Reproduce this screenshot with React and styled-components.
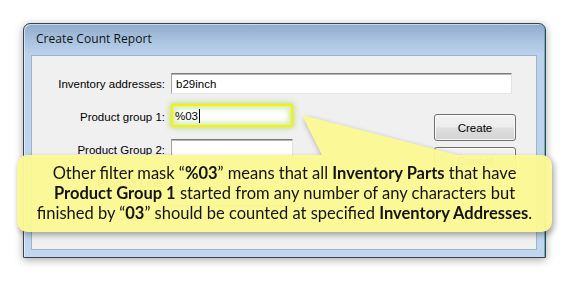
import React from "react";
import styled, { createGlobalStyle } from "styled-components";

const Global = createGlobalStyle`
  html, body { margin: 0; padding: 0; background: #ffffff; }
  body { font-family: "Liberation Sans", Arial, sans-serif; }
`;

const Page = styled.div`
  position: relative;
  width: 568px;
  height: 281px;
  overflow: hidden;
  background: #ffffff;
  padding: 23px 0 0 23px;
  box-sizing: border-box;
`;

const Window = styled.div`
  width: 523px;
  height: 235px;
  box-sizing: border-box;
  display: flex;
  flex-direction: column;
  border: 1px solid #3f4247;
  border-radius: 7px 7px 0 0;
  background: linear-gradient(180deg, #8eaacb 0px, #a9c2df 16px, #bad2ec 31px, #c0d7ef 100%);
  box-shadow: 0 2px 9px rgba(0, 0, 0, 0.35), inset -1px 0 0 #5fb0c4, inset 1px 1px 0 rgba(255,255,255,0.55);
`;

const TitleBar = styled.div`
  height: 31px;
  display: flex;
  align-items: center;
  padding: 0 0 2px 12px;
  box-sizing: border-box;
  font-family: "Open Sans", "Noto Sans", sans-serif;
  font-size: 12px;
  color: #111;
  letter-spacing: 0.05px;
`;

const Client = styled.div`
  flex: 1;
  margin: 0 8px 7px 7px;
  background: #f0f0f0;
  border: 1px solid #9fb3c9;
  box-sizing: border-box;
  display: grid;
  grid-template-columns: 133px 122px 129px 82px;
  grid-auto-rows: 21px;
  column-gap: 6px;
  row-gap: 12px;
  padding-top: 17px;
  align-content: start;
  font-size: 11.5px;
  color: #000;
`;

const Label = styled.div`
  grid-column: 1;
  display: flex;
  align-items: center;
  justify-content: flex-end;
  white-space: nowrap;
`;

const Field = styled.div`
  grid-column: ${(p) => (p.$wide ? "2 / -1" : "2")};
  width: ${(p) => (p.$wide ? "341px" : "auto")};
  height: 21px;
  box-sizing: border-box;
  background: #ffffff;
  border: 1px solid;
  border-color: #7b7b7b #e2e2e2 #e6e6e6 #a3a3a3;
  box-shadow: inset 0 1px 0 #b5b5b5;
  display: flex;
  align-items: center;
  padding-left: 4px;
  white-space: nowrap;
`;

const HighlightField = styled.div`
  grid-column: 2;
  align-self: end;
  height: 23px;
  box-sizing: border-box;
  border: 2px solid #f4f400;
  border-radius: 3px;
  background: #ffffff;
  box-shadow: 0 0 5px 2px rgba(190, 222, 120, 0.75), inset 0 0 5px 3px rgba(205, 232, 160, 0.8);
  display: flex;
  align-items: center;
  padding-left: 2px;
  white-space: nowrap;
`;

const Caret = styled.span`
  display: inline-block;
  width: 1px;
  height: 14px;
  background: #000;
  margin-left: 1px;
`;

const ButtonColumn = styled.div`
  grid-column: 4;
  grid-row: 2 / span 3;
  display: flex;
  flex-direction: column;
  gap: 6px;
  padding-top: 8px;
`;

const Button = styled.div`
  width: 82px;
  height: 27px;
  box-sizing: border-box;
  border: 1px solid #6f6f6f;
  border-radius: 3px;
  background: linear-gradient(180deg, #f3f3f3 0%, #ececec 48%, #dfdfdf 52%, #d3d3d3 100%);
  box-shadow: inset 0 0 0 1px rgba(255, 255, 255, 0.8);
  display: flex;
  align-items: center;
  justify-content: center;
  font-size: 11.5px;
`;

const CalloutWrap = styled.div`
  position: absolute;
  left: 17px;
  top: 114px;
  width: 540px;
  height: 125px;
  filter: drop-shadow(2px 3px 3px rgba(0, 0, 0, 0.35));
  opacity: 0.965;
`;

const Pointer = styled.svg`
  position: absolute;
  left: 0;
  top: 0;
  overflow: visible;
`;

const CalloutBox = styled.div`
  position: absolute;
  left: 0;
  top: 41px;
  width: 535px;
  height: 77px;
  box-sizing: border-box;
  border-radius: 10px;
  background: #fbf994;
  padding-top: 8px;
  text-align: center;
  font-family: Lato, "Open Sans", sans-serif;
  font-size: 16.5px;
  line-height: 20px;
  color: #0d0d0d;
  white-space: nowrap;
`;

const B = styled.b`
  font-weight: 700;
`;

export default function App() {
  return (
    <Page>
      <Global />
      <Window>
        <TitleBar>Create Count Report</TitleBar>
        <Client>
          <Label>Inventory addresses:</Label>
          <Field $wide>b29inch</Field>

          <Label>Product group 1:</Label>
          <HighlightField>
            %03
            <Caret />
          </HighlightField>

          <Label>Product Group 2:</Label>
          <Field />

          <Label>Product Line:</Label>
          <Field />

          <Label>Counters:</Label>
          <Field />

          <ButtonColumn>
            <Button>Create</Button>
            <Button>Cancel</Button>
          </ButtonColumn>
        </Client>
      </Window>

      <CalloutWrap>
        <Pointer width="1" height="1">
          <polygon points="285,1 306,43 448,43" fill="#fbf994" />
        </Pointer>
        <CalloutBox>
          Other filter mask “<B>%03</B>” means that all <B>Inventory Parts</B> that have
          <br />
          <B>Product Group 1</B> started from any number of any characters but
          <br />
          finished by “<B>03</B>” should be counted at specified <B>Inventory Addresses</B>.
        </CalloutBox>
      </CalloutWrap>
    </Page>
  );
}
